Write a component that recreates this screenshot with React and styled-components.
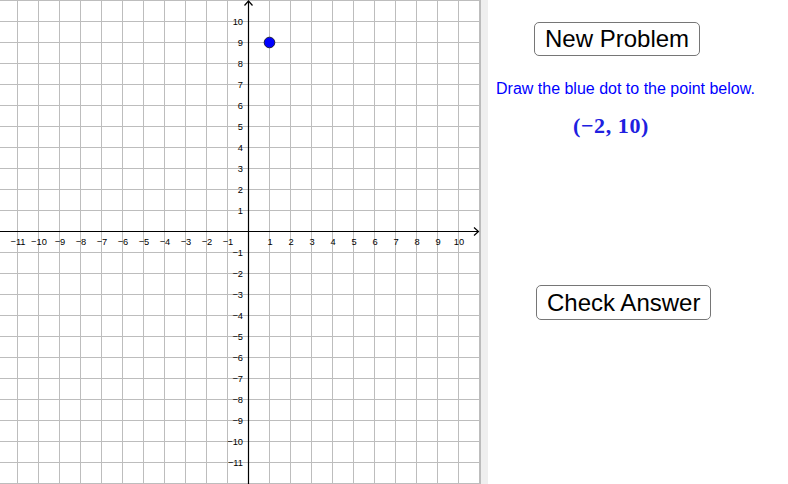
import React from "react";
import styled, { createGlobalStyle } from "styled-components";

const Global = createGlobalStyle`
  html, body { margin: 0; padding: 0; background: #fff; }
  body { font-family: "Liberation Sans", Arial, sans-serif; overflow: hidden; }
`;

const Page = styled.div`
  display: flex;
  width: 788px;
  height: 484px;
  overflow: hidden;
`;

const GraphView = styled.div`
  width: 480px;
  height: 484px;
  flex: none;
`;

const Divider = styled.div`
  width: 7px;
  flex: none;
  border-left: 1px solid #bcbcbc;
  background: #efefef;
`;

const Side = styled.div`
  flex: 1;
  display: flex;
  flex-direction: column;
  align-items: flex-start;
  padding-left: 8px;
`;

const Button = styled.button`
  font-family: "Liberation Sans", Arial, sans-serif;
  font-size: 24px;
  line-height: 28px;
  color: #000;
  background: #fff;
  border: 1.5px solid #767676;
  border-radius: 5px;
  padding: 2px 10px 2px 10px;
  height: ${(p) => p.$h}px;
  margin-top: ${(p) => p.$top}px;
  margin-left: ${(p) => p.$left}px;
  cursor: pointer;
`;

const Prompt = styled.div`
  margin-top: 24px;
  font-size: 16px;
  line-height: 18px;
  color: #0000ff;
`;

const MathText = styled.div`
  margin-top: 15px;
  margin-left: 77px;
  font-family: "Liberation Serif", "Times New Roman", serif;
  font-weight: bold;
  font-size: 22px;
  line-height: 26px;
  letter-spacing: 0.6px;
  color: #2020e0;
`;

const OX = 248;
const OY = 231;
const S = 21;
const range = (a, b) => Array.from({ length: b - a + 1 }, (_, i) => a + i);

function Graph() {
  const xs = range(-11, 11);
  const ys = range(-12, 11);
  return (
    <svg width="480" height="484" viewBox="0 0 480 484">
      <g stroke="#bdbdbd" strokeWidth="1">
        {xs.map((k) => (
          <line key={"v" + k} x1={OX + S * k + 0.5} y1="0" x2={OX + S * k + 0.5} y2="484" />
        ))}
        {ys.map((k) => (
          <line key={"h" + k} x1="0" y1={OY - S * k + 0.5} x2="480" y2={OY - S * k + 0.5} />
        ))}
      </g>
      <g stroke="#000" strokeWidth="1.2" fill="none">
        <line x1={OX + 0.5} y1="1" x2={OX + 0.5} y2="484" />
        <line x1="0" y1={OY + 0.5} x2="478" y2={OY + 0.5} />
        <polyline points={`${OX - 3.5},5.5 ${OX + 0.5},1 ${OX + 4.5},5.5`} />
        <polyline points={`474,${OY - 3.5} 478.5,${OY + 0.5} 474,${OY + 4.5}`} />
      </g>
      <g fontFamily="Liberation Sans, Arial, sans-serif" fontSize="9.3" fill="#000">
        {range(-11, 10)
          .filter((k) => k !== 0)
          .map((k) => (
            <text key={"xl" + k} x={OX + S * k + 1} y={OY + 14} textAnchor="middle">
              {k < 0 ? "\u2212" + -k : k}
            </text>
          ))}
        {range(-11, 10)
          .filter((k) => k !== 0)
          .map((k) => (
            <text key={"yl" + k} x={OX - 5} y={OY - S * k + 4} textAnchor="end">
              {k < 0 ? "\u2212" + -k : k}
            </text>
          ))}
      </g>
      <circle cx={OX + S + 0.5} cy={OY - 9 * S + 0.5} r="5.3" fill="#0000ff" stroke="#1a1a40" strokeWidth="1" />
    </svg>
  );
}

export default function App() {
  return (
    <>
      <Global />
      <Page>
        <GraphView>
          <Graph />
        </GraphView>
        <Divider />
        <Side>
          <Button $top={22} $left={38} $h={34}>New Problem</Button>
          <Prompt>Draw the blue dot to the point below.</Prompt>
          <MathText>(−2, 10)</MathText>
          <Button $top={146} $left={40} $h={35}>Check Answer</Button>
        </Side>
      </Page>
    </>
  );
}
